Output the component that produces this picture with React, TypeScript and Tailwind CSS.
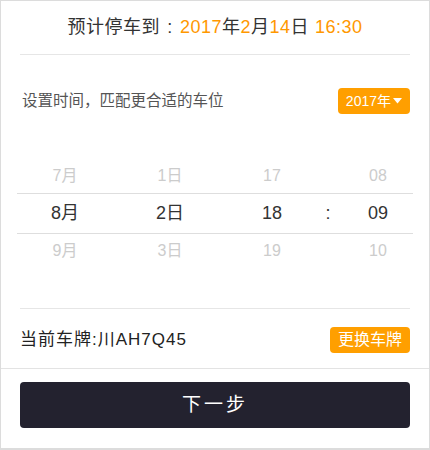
const font = { fontFamily: '"Liberation Sans", "Noto Sans CJK SC", sans-serif' };

const columns = [
  { w: "w-[96px]", items: ["7月", "8月", "9月"] },
  { w: "w-[114px]", items: ["1日", "2日", "3日"] },
  { w: "w-[90px]", items: ["17", "18", "19"] },
  { w: "w-[22px]", items: ["", ":", ""] },
  { w: "w-[74px] pl-1", items: ["08", "09", "10"] },
];

function PickerRow({ index, className }: { index: number; className: string }) {
  const selected = index === 1;
  return (
    <div className={`flex items-center ${className}`}>
      {columns.map((col, i) => (
        <div
          key={i}
          className={`${col.w} text-center ${
            selected ? "text-[18px] text-[#333]" : "text-[16px] text-[#ccc]"
          }`}
        >
          {col.items[index]}
        </div>
      ))}
    </div>
  );
}

export default function App() {
  return (
    <div
      style={font}
      className="flex h-[450px] w-[430px] flex-col border border-b-2 border-[#dcdcdc] bg-white"
    >
      <div className="flex h-[53px] items-center justify-center text-[18px] tracking-[0.5px] text-[#333]">
        预计停车到
        <span className="inline-block w-[20px] text-center">:</span>
        <span className="text-[#ff9800]">2017</span>年
        <span className="text-[#ff9800]">2</span>月<span className="text-[#ff9800]">14</span>日
        <span className="ml-[6px] text-[#ff9800]">16:30</span>
      </div>
      <div className="mx-[19px] h-px bg-[#e6e6e6]" />

      <div className="mx-[21px] mt-[33px] flex h-[26px] items-center justify-between">
        <span className="text-[15.5px] text-[#555]">设置时间，匹配更合适的车位</span>
        <button className="-mr-[2px] flex h-[26px] items-center gap-[2px] rounded-[4px] bg-[#ff9f00] px-[8px] text-[14px] text-white">
          2017年
          <svg width="9" height="6" viewBox="0 0 9 6">
            <path d="M0 0h9L4.5 5.5z" fill="white" />
          </svg>
        </button>
      </div>

      <div className="mx-[16px] mt-[45px]">
        <PickerRow index={0} className="h-[34px]" />
        <div className="h-px bg-[#dedede]" />
        <PickerRow index={1} className="h-[39px]" />
        <div className="h-px bg-[#dedede]" />
        <PickerRow index={2} className="h-[34px]" />
      </div>

      <div className="mx-[19px] mt-[40px] h-px bg-[#e6e6e6]" />
      <div className="mx-[19px] mt-[18px] flex h-[26px] items-center justify-between">
        <span className="text-[17px] tracking-[1px] text-[#222]">当前车牌:川AH7Q45</span>
        <button className="h-[26px] rounded-[4px] bg-[#ff9f00] px-[8px] text-[16px] text-white">
          更换车牌
        </button>
      </div>
      <div className="mt-[15px] h-px bg-[#e3e3e3]" />

      <button className="mx-[19px] mt-[13px] h-[46px] rounded-[4px] bg-[#23222f] text-[19px] tracking-[3px] text-white">
        下一步
      </button>
    </div>
  );
}
